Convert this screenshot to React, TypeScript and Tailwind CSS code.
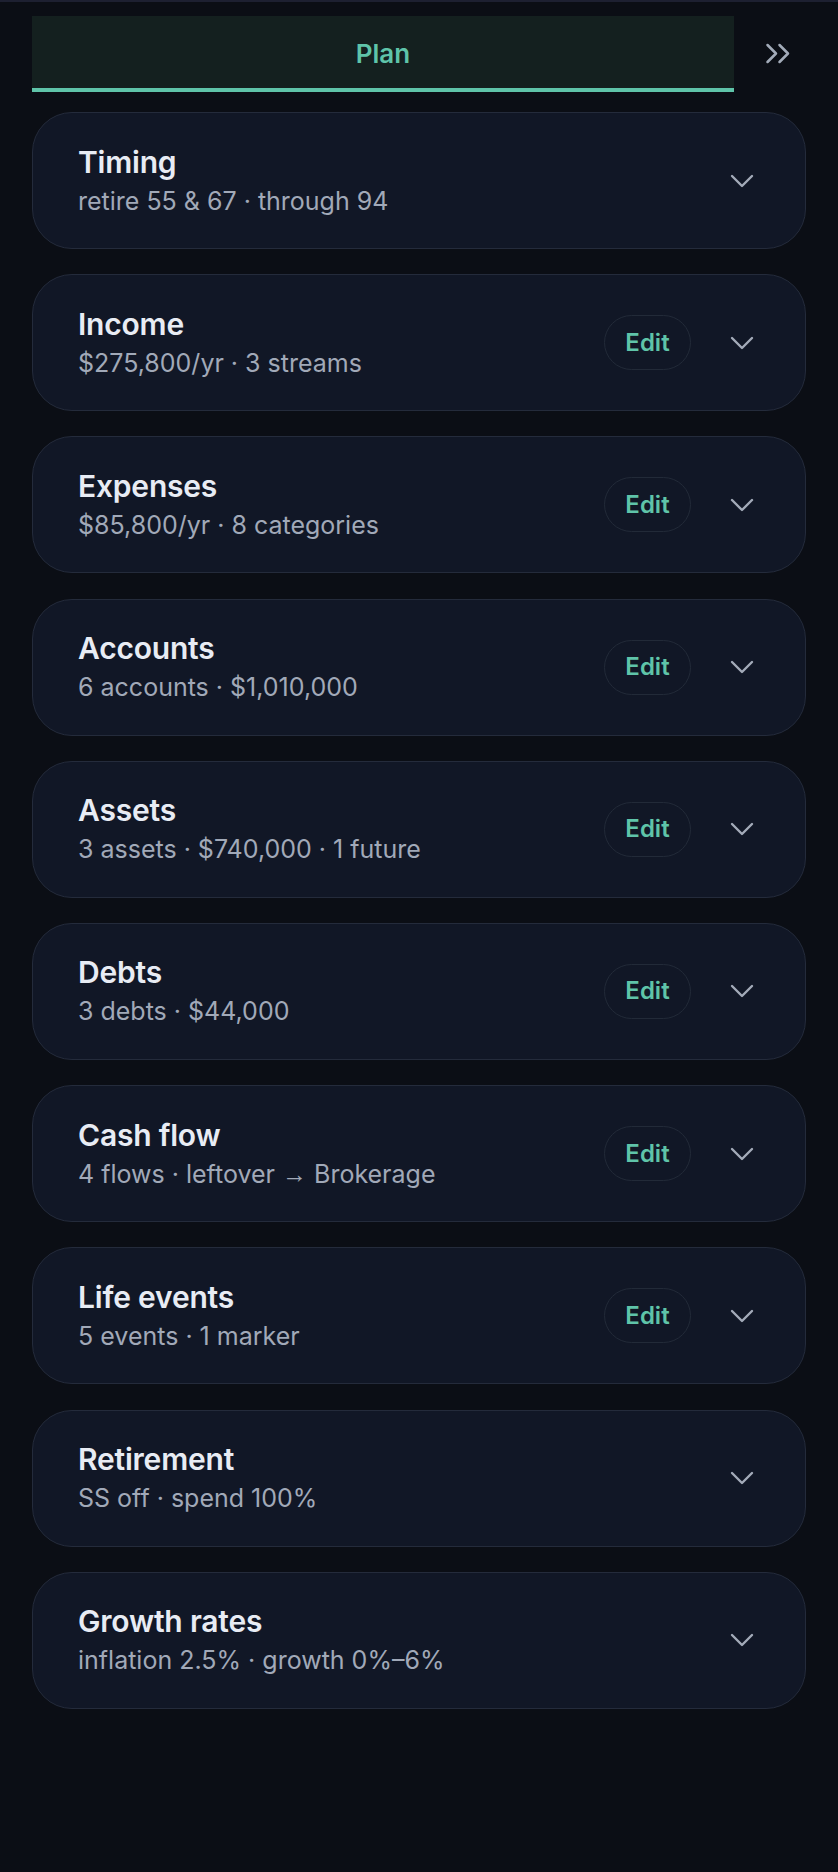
import React from "react";

type Item = { title: string; sub: React.ReactNode; edit: boolean };

const items: Item[] = [
  { title: "Timing", sub: "retire 55 & 67 · through 94", edit: false },
  { title: "Income", sub: "$275,800/yr · 3 streams", edit: true },
  { title: "Expenses", sub: "$85,800/yr · 8 categories", edit: true },
  { title: "Accounts", sub: "6 accounts · $1,010,000", edit: true },
  { title: "Assets", sub: "3 assets · $740,000 · 1 future", edit: true },
  { title: "Debts", sub: "3 debts · $44,000", edit: true },
  {
    title: "Cash flow",
    sub: (
      <>
        4 flows · leftover{" "}
        <span style={{ fontFamily: "'Liberation Sans', sans-serif" }}>→</span> Brokerage
      </>
    ),
    edit: true,
  },
  { title: "Life events", sub: "5 events · 1 marker", edit: true },
  { title: "Retirement", sub: "SS off · spend 100%", edit: false },
  { title: "Growth rates", sub: "inflation 2.5% · growth 0%–6%", edit: false },
];

function ChevronDown() {
  return (
    <svg width="24" height="14" viewBox="0 0 24 14" fill="none" className="shrink-0">
      <path d="M2 2 L12 12 L22 2" stroke="#a3abb9" strokeWidth="2.4" strokeLinecap="round" strokeLinejoin="round" />
    </svg>
  );
}

function ChevronsRight() {
  return (
    <svg width="27" height="21" viewBox="0 0 27 21" fill="none">
      <path
        d="M2.5 2 L11 10.5 L2.5 19 M14.5 2 L23 10.5 L14.5 19"
        stroke="#a3abb9"
        strokeWidth="2.5"
        strokeLinecap="round"
        strokeLinejoin="round"
      />
    </svg>
  );
}

export default function App() {
  return (
    <div
      className="min-h-[1872px] w-full bg-[#0b0e15]"
      style={{ fontFamily: "Inter, 'Noto Sans', sans-serif" }}
    >
      <div className="h-[2px] bg-[#1d2031]" />
      <div className="px-8 pt-[14px]">
        <div className="flex items-center">
          <div className="w-[702px] h-[76px] bg-[#14201f] border-b-4 border-[#5fc4a9] flex items-center justify-center pt-[3px]">
            <span className="text-[26px] font-semibold text-[#5fc4a9] leading-none">Plan</span>
          </div>
          <div className="ml-[31px] mb-[2px] flex items-center">
            <ChevronsRight />
          </div>
        </div>
        <div className="mt-5 flex flex-col gap-[25.2px]">
          {items.map((it) => (
            <div
              key={it.title}
              className="h-[137px] rounded-[40px] border-[1.5px] border-[#242b3b] bg-[#111726] flex items-center pl-[45px] pr-[51px]"
            >
              <div className="flex-1 flex flex-col">
                <div className="text-[30px] leading-[36px] font-semibold text-[#e8ecf4] tracking-[-0.2px]">
                  {it.title}
                </div>
                <div className="mt-1 text-[25px] leading-[34px] text-[#a1a9b8]">{it.sub}</div>
              </div>
              {it.edit && (
                <div className="w-[87px] h-[55px] rounded-full border-[1.5px] border-[#222a38] flex items-center justify-center mr-[39px]">
                  <span className="text-[24px] font-semibold text-[#5fc4a9] leading-none">Edit</span>
                </div>
              )}
              <ChevronDown />
            </div>
          ))}
        </div>
      </div>
    </div>
  );
}
